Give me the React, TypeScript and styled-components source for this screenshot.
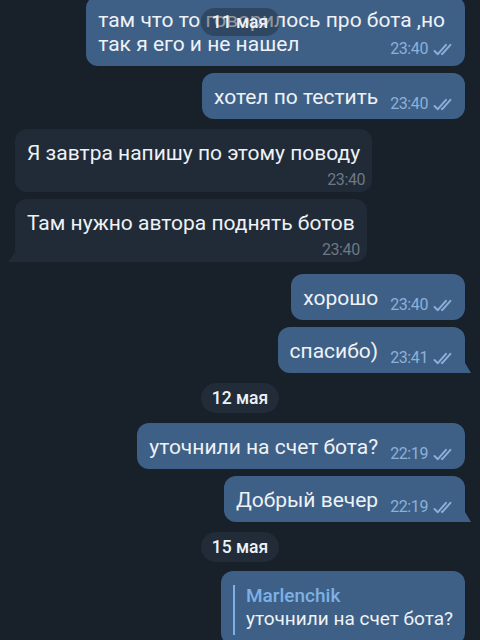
import React from "react";
import styled, { createGlobalStyle, css } from "styled-components";

const Global = createGlobalStyle`
  html, body { margin: 0; padding: 0; background: #18202a; }
  body { font-family: Roboto, "Noto Sans", sans-serif; -webkit-font-smoothing: antialiased; }
`;

const Viewport = styled.div`
  position: relative;
  width: 480px;
  height: 640px;
  overflow: hidden;
  background: #18202a;
`;

const Feed = styled.div`
  display: flex;
  flex-direction: column;
  margin-top: -4px;
  padding: 0 15px;
`;

const Row = styled.div<{ $out?: boolean; $gap: number }>`
  display: flex;
  justify-content: ${(p) => (p.$out ? "flex-end" : "flex-start")};
  margin-top: ${(p) => p.$gap}px;
`;

const Bubble = styled.div<{ $out?: boolean; $tail?: boolean; $stacked?: boolean; $padRight?: number }>`
  position: relative;
  box-sizing: border-box;
  background: ${(p) => (p.$out ? "#3e6087" : "#212b37")};
  color: #eef2f6;
  border-radius: 12px;
  padding: 12px ${(p) => p.$padRight ?? 10}px 10px 12px;
  font-size: 21px;
  line-height: 24px;
  ${(p) =>
    p.$stacked &&
    css`
      display: flex;
      flex-direction: column;
      padding: 12px 12px 4px 12px;
    `}
  ${(p) =>
    p.$tail &&
    (p.$out
      ? css`
          border-bottom-right-radius: 0;
          &::after {
            content: "";
            position: absolute;
            right: -6px;
            bottom: 0;
            width: 6px;
            height: 10px;
            background: #3e6087;
            clip-path: polygon(0 0, 100% 100%, 0 100%);
          }
        `
      : css`
          border-bottom-left-radius: 0;
          &::after {
            content: "";
            position: absolute;
            left: -7px;
            bottom: 0;
            width: 7px;
            height: 10px;
            background: #212b37;
            clip-path: polygon(100% 0, 100% 100%, 0 100%);
          }
        `)}
`;

type MetaMode = "inline" | "block" | "corner";

const Meta = styled.span<{ $out?: boolean; $mode: MetaMode }>`
  position: relative;
  top: 5px;
  display: inline-flex;
  align-items: center;
  gap: 5px;
  margin-left: 12px;
  font-size: 16px;
  line-height: 16px;
  letter-spacing: -0.4px;
  color: ${(p) => (p.$out ? "#8db0d8" : "#6c7885")};
  ${(p) =>
    p.$mode === "block" &&
    css`
      top: 0;
      align-self: flex-end;
      margin-top: 7px;
      margin-left: 0;
      margin-right: -5px;
    `}
  ${(p) =>
    p.$mode === "corner" &&
    css`
      float: right;
      top: 9px;
      margin-right: -10px;
    `}
`;

const DateRow = styled.div<{ $gap: number }>`
  display: flex;
  justify-content: center;
  margin-top: ${(p) => p.$gap}px;
`;

const DatePill = styled.div<{ $floating?: boolean }>`
  background: ${(p) => (p.$floating ? "rgba(30, 42, 56, 0.45)" : "#222c38")};
  color: #eef2f6;
  font-size: 17.5px;
  font-weight: 500;
  line-height: 30px;
  padding: 0 11px;
  border-radius: 15px;
  ${(p) =>
    p.$floating &&
    css`
      position: absolute;
      top: 8px;
      left: 50%;
      transform: translateX(-50%);
      line-height: 28px;
    `}
`;

const Reply = styled.div`
  display: flex;
  flex-direction: column;
  border-left: 2.5px solid #7db1e6;
  padding-left: 11px;
  margin-top: 2px;
`;

const ReplyName = styled.span`
  color: #7db1e6;
  font-weight: 500;
  font-size: 19px;
  line-height: 22px;
`;

const ReplyText = styled.span`
  font-size: 19px;
  line-height: 24px;
  padding-bottom: 4px;
`;

const Checks = () => (
  <svg width="22" height="13" viewBox="0 0 22 13" fill="none" stroke="currentColor" strokeWidth="1.9" strokeLinecap="round" strokeLinejoin="round">
    <path d="M1.5 8 L4.8 11.2 L13 1.8" />
    <path d="M8.8 10.8 L9.2 11.2 L17.4 1.8" />
  </svg>
);

type Msg = {
  kind: "msg";
  out?: boolean;
  tail?: boolean;
  stacked?: boolean;
  corner?: boolean;
  padRight?: number;
  gap: number;
  time: string;
  text: React.ReactNode;
};
type Day = { kind: "day"; gap: number; label: string };

const items: (Msg | Day)[] = [
  {
    kind: "msg",
    out: true,
    gap: 0,
    padRight: 20,
    corner: true,
    time: "23:40",
    text: (
      <>
        там что то говорилось про бота ,но
        <br />
        так я его и не нашел
      </>
    ),
  },
  { kind: "msg", out: true, gap: 7, time: "23:40", text: "хотел по тестить" },
  { kind: "msg", gap: 10, stacked: true, time: "23:40", text: "Я завтра напишу по этому поводу" },
  { kind: "msg", gap: 7, stacked: true, tail: true, time: "23:40", text: "Там нужно автора поднять ботов" },
  { kind: "msg", out: true, gap: 12, time: "23:40", text: "хорошо" },
  { kind: "msg", out: true, tail: true, gap: 7, time: "23:41", text: "спасибо)" },
  { kind: "day", gap: 10, label: "12 мая" },
  { kind: "msg", out: true, gap: 10, time: "22:19", text: "уточнили на счет бота?" },
  { kind: "msg", out: true, tail: true, gap: 7, time: "22:19", text: "Добрый вечер" },
  { kind: "day", gap: 10, label: "15 мая" },
];

export default function App() {
  return (
    <>
      <Global />
      <Viewport>
        <Feed>
          {items.map((it, i) =>
            it.kind === "day" ? (
              <DateRow key={i} $gap={it.gap}>
                <DatePill>{it.label}</DatePill>
              </DateRow>
            ) : (
              <Row key={i} $out={it.out} $gap={it.gap}>
                <Bubble $out={it.out} $tail={it.tail} $stacked={it.stacked} $padRight={it.padRight}>
                  <span>{it.text}</span>
                  <Meta $out={it.out} $mode={it.stacked ? "block" : it.corner ? "corner" : "inline"}>
                    {it.time}
                    {it.out && <Checks />}
                  </Meta>
                </Bubble>
              </Row>
            )
          )}
          <Row $out $gap={9}>
            <Bubble $out $padRight={12}>
              <Reply>
                <ReplyName>Marlenchik</ReplyName>
                <ReplyText>уточнили на счет бота?</ReplyText>
              </Reply>
            </Bubble>
          </Row>
        </Feed>
        <DatePill $floating>11 мая</DatePill>
      </Viewport>
    </>
  );
}
